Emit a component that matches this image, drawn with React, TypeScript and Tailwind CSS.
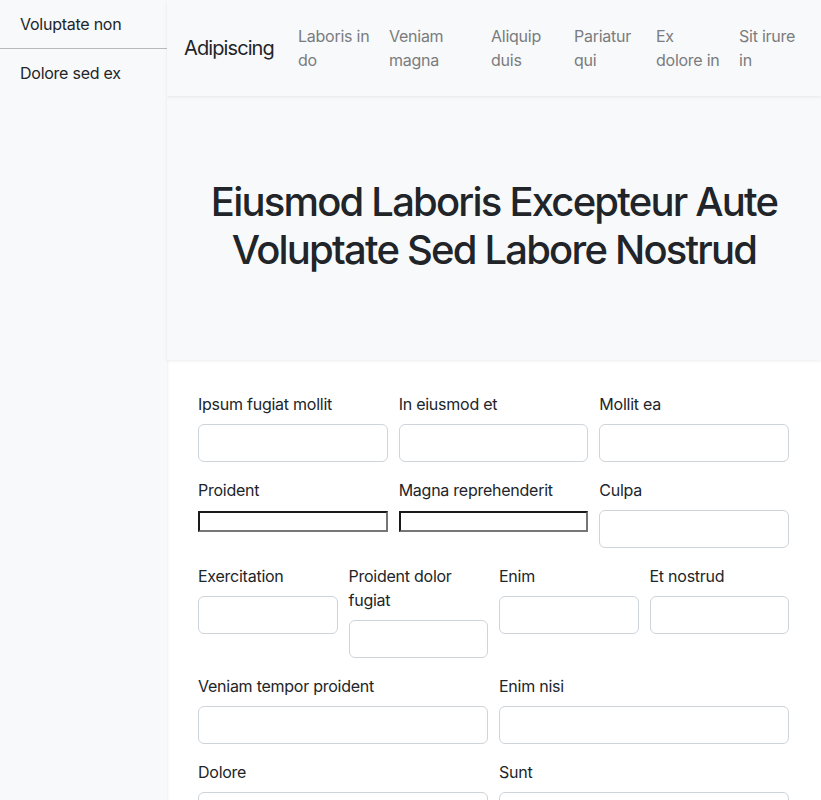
const navLinks = [
  { label: 'Laboris in do', w: 'w-[91px]' },
  { label: 'Veniam magna', w: 'w-[102px]' },
  { label: 'Aliquip duis', w: 'w-[83px]' },
  { label: 'Pariatur qui', w: 'w-[82px]' },
  { label: 'Ex dolore in', w: 'w-[83px]' },
  { label: 'Sit irure in', w: 'w-[82px]' },
];

// Bootstrap-ish text input
const Field = ({ label }: { label: string }) => (
  <div className="flex flex-col">
    <label className="mb-2 text-base leading-6 text-[#212529]">{label}</label>
    <input className="h-[38px] w-full rounded-[6px] border border-[#ced4da] bg-white px-3" />
  </div>
);

// Unstyled native-looking input
const PlainField = ({ label }: { label: string }) => (
  <div className="flex flex-col">
    <label className="mb-[9px] text-base leading-6 text-[#212529]">{label}</label>
    <input className="h-[21px] w-full border-2 border-t-[#1a1a1a] border-l-[#1a1a1a] border-b-[#767676] border-r-[#767676] bg-white" />
  </div>
);

const App = () => {
  return (
    <div
      className="flex min-h-screen bg-white tracking-[-0.25px] text-[#212529]"
      style={{ fontFamily: 'Inter, "Liberation Sans", sans-serif' }}
    >
      {/* Sidebar */}
      <aside className="w-[167px] shrink-0 bg-[#f8f9fa] shadow-[1px_0_2px_rgba(0,0,0,0.06)] z-10">
        <div className="px-5 py-3 text-base leading-6">Voluptate non</div>
        <div className="h-px bg-[#b9babb]" />
        <div className="px-5 py-3 text-base leading-6">Dolore sed ex</div>
      </aside>

      <main className="flex-1 min-w-0">
        {/* Navbar */}
        <nav className="relative z-20 flex h-24 items-center bg-[#f8f9fa] pl-[17px] shadow-[0_1px_3px_rgba(0,0,0,0.08)]">
          <span className="w-[106px] text-xl leading-[30px] tracking-[-0.9px] text-[#212529]">Adipiscing</span>
          <div className="flex">
            {navLinks.map((l) => (
              <a key={l.label} href="#" className={`${l.w} px-2 text-base leading-6 text-[#7a7c7e]`}>
                {l.label}
              </a>
            ))}
          </div>
        </nav>

        {/* Hero */}
        <section className="relative z-10 flex h-[264px] items-center justify-center bg-[#f8f9fa] pb-[5px] shadow-[0_1px_3px_rgba(0,0,0,0.08)]">
          <h1 className="text-center text-[40px] font-medium leading-[48px] tracking-[-1.8px] text-[#212529]">
            Eiusmod Laboris Excepteur Aute
            <br />
            Voluptate Sed Labore Nostrud
          </h1>
        </section>

        {/* Form */}
        <section className="pl-[31px] pr-[32px] pt-8">
          <div className="grid grid-cols-3 gap-x-[11px] gap-y-4">
            <Field label="Ipsum fugiat mollit" />
            <Field label="In eiusmod et" />
            <Field label="Mollit ea" />
            <PlainField label="Proident" />
            <PlainField label="Magna reprehenderit" />
            <Field label="Culpa" />
          </div>
          <div className="mt-4 grid grid-cols-4 items-start gap-x-[11px]">
            <Field label="Exercitation" />
            <Field label="Proident dolor fugiat" />
            <Field label="Enim" />
            <Field label="Et nostrud" />
          </div>
          <div className="mt-4 grid grid-cols-2 gap-x-[11px] gap-y-4">
            <Field label="Veniam tempor proident" />
            <Field label="Enim nisi" />
            <Field label="Dolore" />
            <Field label="Sunt" />
          </div>
        </section>
      </main>
    </div>
  );
};

export default App;
